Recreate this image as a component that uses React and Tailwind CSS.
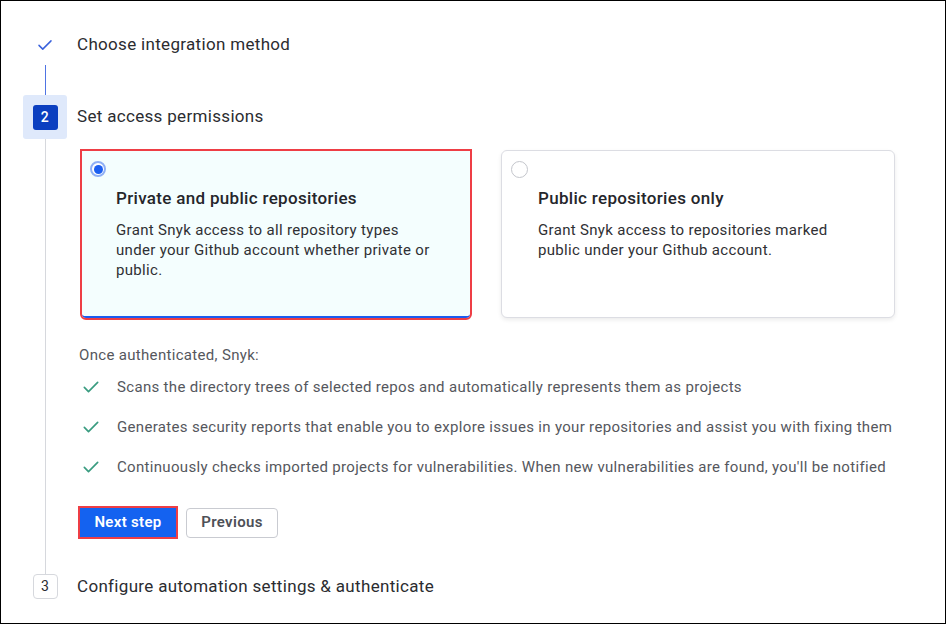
import React from 'react';

const CheckIcon = ({ className }) => (
    <svg viewBox="0 0 24 24" fill="none" stroke="currentColor" strokeWidth="2" strokeLinecap="round" strokeLinejoin="round" className={className}>
        <path d="M4 12.5l5 5L20 6.5" />
    </svg>
);

const RepoCard = ({ selected, title, description }) => (
    <div
        className={`flex flex-col ${selected
            ? 'w-[388px] h-[167px] rounded-b-[4px] bg-[#f4fefe] border-b-2 border-[#1a5cf0] outline-2 outline-[#ee3e45]'
            : 'w-[394px] h-[168px] mt-[-1px] rounded-[6px] bg-white border border-[#dcdde3] shadow-[0_2px_4px_rgba(0,0,0,0.08)]'}`}
    >
        <div className={selected ? 'pt-[10px] pl-[8px]' : 'pt-[10px] pl-[9px]'}>
            {selected ? (
                <div className="w-[16px] h-[16px] rounded-full border-2 border-[#8fb0f5] flex items-center justify-center bg-white">
                    <div className="w-[9px] h-[9px] rounded-full bg-[#1c5ff0]" />
                </div>
            ) : (
                <div className="w-[17px] h-[17px] rounded-full border border-[#c4c6cc] bg-white" />
            )}
        </div>
        <div className={selected ? 'pl-[34px] pr-[30px]' : 'pl-[36px] pr-[30px]'}>
            <div className={`${selected ? 'mt-[9px]' : 'mt-[8px]'} text-[17px] leading-[24px] font-medium text-[#25262b]`}>{title}</div>
            <p className="mt-[10px] text-[15px] leading-[20px] text-[#2f3034]">{description}</p>
        </div>
    </div>
);

const Benefit = ({ children }) => (
    <div className="flex items-center h-[40px]">
        <CheckIcon className="w-[20px] h-[20px] text-[#3a9c80]" />
        <span className="ml-[16px] text-[15px] text-[#55575d]">{children}</span>
    </div>
);

export default function App() {
    return (
        <div className="w-[947px] h-[625px] bg-white tracking-[0.02em]" style={{ fontFamily: 'Roboto, "Liberation Sans", sans-serif' }}>
            <div className="w-[946px] h-[624px] border border-black overflow-hidden">
                <div className="pl-[22px] pt-[24px] flex flex-col">

                    {/* Step 1 - done */}
                    <div className="flex">
                        <div className="w-[44px] flex flex-col items-center">
                            <div className="h-[40px] flex items-center justify-center">
                                <CheckIcon className="w-[18px] h-[18px] text-[#3a62dc]" />
                            </div>
                            <div className="w-px flex-1 bg-[#4f74e3]" />
                        </div>
                        <div className="ml-[10px]">
                            <div className="h-[40px] flex items-center text-[17px] text-[#2b2c30]">Choose integration method</div>
                            <div className="h-[30px]" />
                        </div>
                    </div>

                    {/* Step 2 - active */}
                    <div className="flex">
                        <div className="w-[44px] flex flex-col items-center">
                            <div className="w-[44px] h-[44px] rounded-[3px] bg-[#dfe9fb] flex items-center justify-center">
                                <div className="w-[25px] h-[25px] rounded-[3px] bg-[#0b3fc0] text-white text-[14px] font-medium flex items-center justify-center">2</div>
                            </div>
                            <div className="w-px flex-1 bg-[#d6d8dd]" />
                        </div>
                        <div className="ml-[10px] flex flex-col">
                            <div className="h-[44px] flex items-center text-[17px] text-[#2b2c30]">Set access permissions</div>

                            <div className="mt-[12px] ml-[5px] flex gap-[31px]">
                                <RepoCard
                                    selected
                                    title="Private and public repositories"
                                    description="Grant Snyk access to all repository types under your Github account whether private or public."
                                />
                                <RepoCard
                                    title="Public repositories only"
                                    description="Grant Snyk access to repositories marked public under your Github account."
                                />
                            </div>

                            <div className="mt-[27px] ml-[2px] text-[15px] leading-[20px] text-[#55575d]">Once authenticated, Snyk:</div>
                            <div className="mt-[2px] ml-[4px] flex flex-col">
                                <Benefit>Scans the directory trees of selected repos and automatically represents them as projects</Benefit>
                                <Benefit>Generates security reports that enable you to explore issues in your repositories and assist you with fixing them</Benefit>
                                <Benefit>Continuously checks imported projects for vulnerabilities. When new vulnerabilities are found, you'll be notified</Benefit>
                            </div>

                            <div className="mt-[19px] ml-[1px] mb-[35px] flex items-center gap-[8px]">
                                <div className="border-2 border-[#ee3e45]">
                                    <button className="w-[96px] h-[29px] bg-[#1462f0] text-white text-[15px] font-semibold">Next step</button>
                                </div>
                                <button className="w-[92px] h-[30px] rounded-[4px] border border-[#c9cbd1] bg-white text-[#4e5057] text-[15px] font-semibold">Previous</button>
                            </div>
                        </div>
                    </div>

                    {/* Step 3 */}
                    <div className="flex items-center">
                        <div className="w-[44px] flex justify-center">
                            <div className="w-[25px] h-[25px] rounded-[4px] border border-[#d6d8dd] bg-white text-[14px] text-[#2b2c30] flex items-center justify-center">3</div>
                        </div>
                        <div className="ml-[10px] text-[17px] text-[#2b2c30]">Configure automation settings &amp; authenticate</div>
                    </div>
                </div>
            </div>
        </div>
    );
}
